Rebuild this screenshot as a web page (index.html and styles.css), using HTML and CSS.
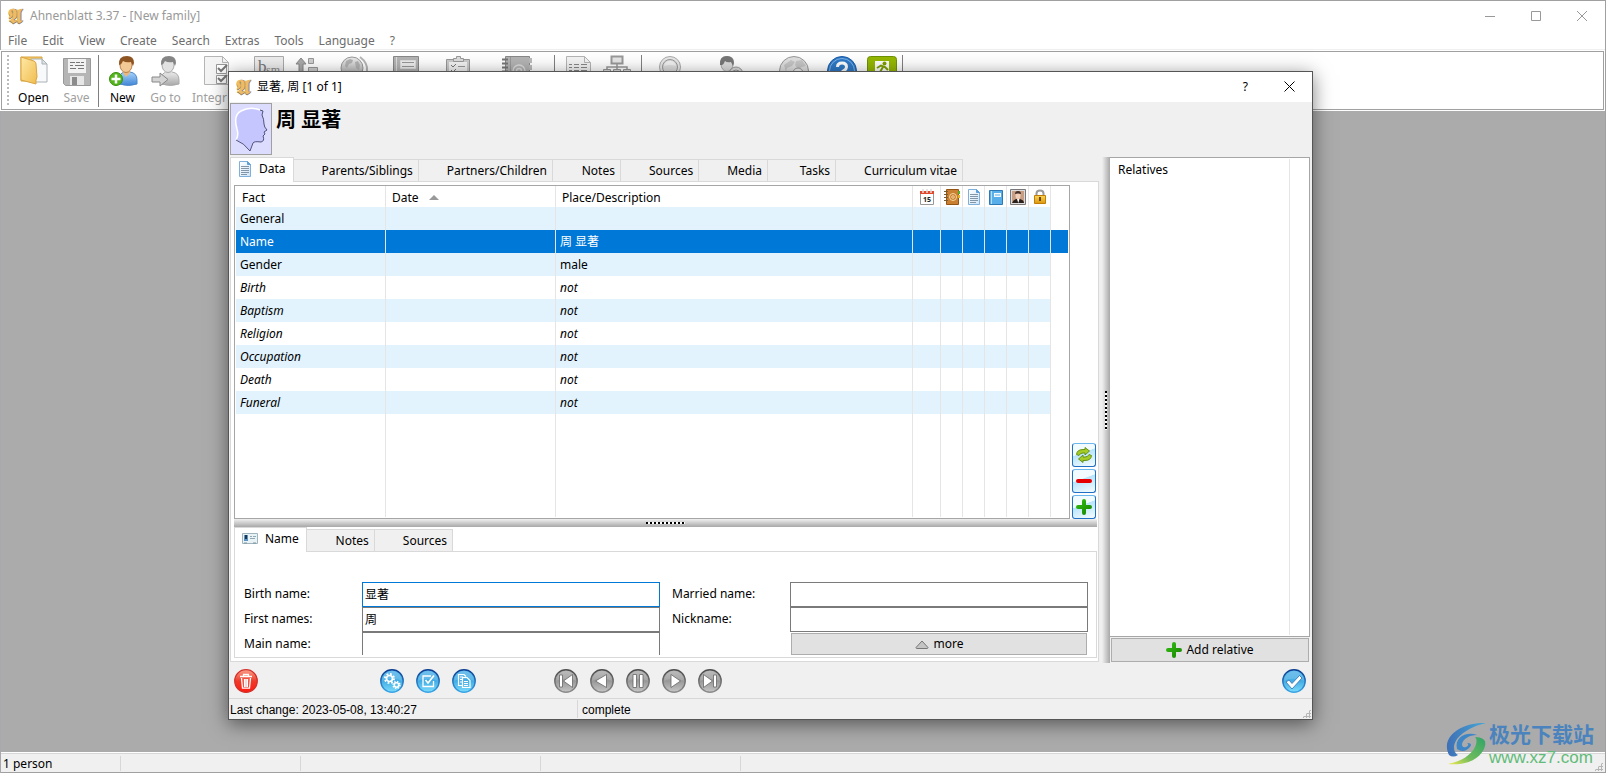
FILE: index.html
```html
<!DOCTYPE html>
<html lang="en">
<head>
    <meta charset="UTF-8">
    <meta name="viewport" content="width=device-width, initial-scale=1.0">
    <title>Ahnenblatt 3.37 - [New family]</title>
    <link rel="stylesheet" href="styles.css">
</head>
<body>
    <!-- Shared gradients and symbols -->
    <svg class="defs" width="0" height="0" aria-hidden="true">
        <defs>
            <linearGradient id="gFolder" x1="0" y1="0" x2="1" y2="1"><stop offset="0" stop-color="#ffe9a6"/><stop offset="1" stop-color="#f0bc4e"/></linearGradient>
            <linearGradient id="gGrey" x1="0" y1="0" x2="0" y2="1"><stop offset="0" stop-color="#ececec"/><stop offset="1" stop-color="#a8a8a8"/></linearGradient>
            <linearGradient id="gBlueBody" x1="0" y1="0" x2="0" y2="1"><stop offset="0" stop-color="#a9d4fa"/><stop offset="1" stop-color="#3f85d6"/></linearGradient>
            <linearGradient id="gPage" x1="0" y1="0" x2="1" y2="1"><stop offset="0" stop-color="#ffffff"/><stop offset="1" stop-color="#cfe4f8"/></linearGradient>
            <linearGradient id="gRed" x1="0" y1="0" x2="0" y2="1"><stop offset="0" stop-color="#f9a08a"/><stop offset=".5" stop-color="#ef3b2a"/><stop offset="1" stop-color="#ff1a10"/></linearGradient>
            <linearGradient id="gSky" x1="0" y1="0" x2="0" y2="1"><stop offset="0" stop-color="#5cb6ea"/><stop offset=".5" stop-color="#43ace4"/><stop offset="1" stop-color="#7bdcfb"/></linearGradient>
            <linearGradient id="gSkyRim" x1="0" y1="0" x2="0" y2="1"><stop offset="0" stop-color="#0b3c91"/><stop offset="1" stop-color="#3aa5e6"/></linearGradient>
            <linearGradient id="gNav" x1="0" y1="0" x2="0" y2="1"><stop offset="0" stop-color="#b4b4b4"/><stop offset=".5" stop-color="#989898"/><stop offset="1" stop-color="#c6c6c6"/></linearGradient>
            <linearGradient id="gNavRim" x1="0" y1="0" x2="0" y2="1"><stop offset="0" stop-color="#4d4d4d"/><stop offset="1" stop-color="#8c8c8c"/></linearGradient>
            <linearGradient id="gGreen" x1="0" y1="0" x2="1" y2="1"><stop offset="0" stop-color="#35c315"/><stop offset="1" stop-color="#178000"/></linearGradient>
            <linearGradient id="gLock" x1="0" y1="0" x2="0" y2="1"><stop offset="0" stop-color="#fbd65a"/><stop offset="1" stop-color="#dd960c"/></linearGradient>
            <linearGradient id="gSwirl" x1="0" y1="0" x2="1" y2="0"><stop offset="0" stop-color="#3f6fb5"/><stop offset="1" stop-color="#45a8d8"/></linearGradient>
            <linearGradient id="gLeaf" x1="1" y1="0" x2="0" y2="1"><stop offset="0" stop-color="#2fa368"/><stop offset=".6" stop-color="#6fbc5c"/><stop offset="1" stop-color="#f2ea50"/></linearGradient>
        </defs>
        <symbol id="page" viewBox="0 0 14 16">
            <path d="M1.5.5h8l3 3v12h-11z" fill="url(#gPage)" stroke="#7fb0dc"/>
            <path d="M9.500.5v3h3z" fill="#5f9fd8" stroke="#5f9fd8"/>
            <path d="M3 5.500h8M3 7.500h8M3 9.500h8M3 11.500h8M3 13.500h6" stroke="#8396a8"/>
        </symbol>
        <symbol id="plus" viewBox="0 0 16 16">
            <path d="M6 2q0-2 2-2t2 2v4h4q2 0 2 2t-2 2h-4v4q0 2-2 2t-2-2v-4H2Q0 10 0 8t2-2h4z" fill="url(#gGreen)"/>
        </symbol>
        <symbol id="disc-blue" viewBox="0 0 24 24">
            <circle cx="12" cy="12" r="11.200" fill="url(#gSky)" stroke="url(#gSkyRim)" stroke-width="1.400"/>
            <path d="M2 12a10 10 0 0 1 20 0c-5-3-15-3-20 0z" fill="#fff" opacity=".14"/>
        </symbol>
        <symbol id="disc-grey" viewBox="0 0 24 24">
            <circle cx="12" cy="12" r="11.200" fill="url(#gNav)" stroke="url(#gNavRim)" stroke-width="1.400"/>
            <path d="M2 12a10 10 0 0 1 20 0c-5-3-15-3-20 0z" fill="#fff" opacity=".12"/>
        </symbol>
    </svg>

    <div class="app">
        <header class="app-title">
            <span class="logo" aria-hidden="true">𝕬</span>
            <h1>Ahnenblatt 3.37 - [New family]</h1>
            <div class="app-controls">
                <button type="button" aria-label="Minimize"><svg width="10" height="10"><path d="M0 5.500h10" stroke="#999"/></svg></button>
                <button type="button" aria-label="Maximize"><svg width="10" height="10"><path d="M.5.5h9v9h-9z" fill="none" stroke="#999"/></svg></button>
                <button type="button" aria-label="Close"><svg width="10" height="10"><path d="M0 0l10 10M10 0L0 10" stroke="#999"/></svg></button>
            </div>
        </header>

        <nav class="menu">
            <a href="#">File</a>
            <a href="#">Edit</a>
            <a href="#">View</a>
            <a href="#">Create</a>
            <a href="#">Search</a>
            <a href="#">Extras</a>
            <a href="#">Tools</a>
            <a href="#">Language</a>
            <a href="#">?</a>
        </nav>

        <div class="toolbar">
            <span class="grip"></span>
            <button type="button" class="tool">
                <svg width="32" height="32" viewBox="0 0 32 32">
                    <path d="M3 2h21v24H3z" fill="#f4c964" stroke="#d9a441"/>
                    <path d="M13 4h11l5 5v18H13z" fill="#f7f9fa" stroke="#a9b1b5"/>
                    <path d="M24 4v5h5z" fill="#dde3e6" stroke="#a9b1b5"/>
                    <path d="M3 2l13 4q2 1 2 3l1 13-1 3v4L3 25z" fill="url(#gFolder)" stroke="#d9a441"/>
                </svg>
                Open
            </button>
            <button type="button" class="tool" disabled>
                <svg width="32" height="32" viewBox="0 0 32 32">
                    <path d="M2.500 3.500h27v27h-25l-2-2z" fill="#b5b5b5" stroke="#999"/>
                    <path d="M7 4h18v14H7z" fill="#f2f2f2"/>
                    <path d="M9 7.500h5m1 0h4m1 0h3M9 10.500h3m2 0h9M9 13.500h6m2 0h6" stroke="#777"/>
                    <path d="M9 21h14v9H9z" fill="#e6e6e6"/>
                    <path d="M11 22h5v8h-5z" fill="#8b8b8b"/>
                </svg>
                Save
            </button>
            <span class="sep"></span>
            <button type="button" class="tool">
                <svg width="32" height="32" viewBox="0 0 32 32">
                    <path d="M12 29v-5q0-6 6-7h5q7 1 7 8v4q-8 3-18 0z" fill="url(#gBlueBody)" stroke="#4d87c9"/>
                    <path d="M16 15h7v3l-4 4-3-4z" fill="#eab87c"/>
                    <ellipse cx="19" cy="10" rx="6" ry="7.500" fill="#f2c894" stroke="#b9824a"/>
                    <path d="M12 10q-1-9 8-9 7 0 7 7l-1 3-2-4q-5 1-8-1-1 3-4 4z" fill="#8e5421"/>
                    <circle cx="9" cy="24" r="6.500" fill="#53b51b" stroke="#3b8e0e"/>
                    <path d="M9 19.500v9M4.500 24h9" stroke="#fff" stroke-width="2.500"/>
                </svg>
                New
            </button>
            <button type="button" class="tool" disabled>
                <svg width="32" height="32" viewBox="0 0 32 32">
                    <path d="M11 29v-5q0-6 6-7h5q7 1 7 8v4q-8 3-18 0z" fill="url(#gGrey)" stroke="#aaa"/>
                    <path d="M15 15h7v3l-4 4-3-4z" fill="#ddd"/>
                    <ellipse cx="18" cy="10" rx="6" ry="7.500" fill="#e2e2e2" stroke="#aaa"/>
                    <path d="M11 10q-1-9 8-9 7 0 7 7l-1 3-2-4q-5 1-8-1-1 3-4 4z" fill="#858585"/>
                    <path d="M2 22h8v-4l8 6.500-8 6.500v-4H2z" fill="#d4d4d4" stroke="#888"/>
                </svg>
                Go to
            </button>
            <button type="button" class="tool tool-wide" disabled>
                <svg width="32" height="32" viewBox="0 0 32 32">
                    <path d="M3.500 1.500h18l6 6v22h-24z" fill="#f4f4f4" stroke="#b5b5b5"/>
                    <path d="M21.500 1.500v6h6" fill="none" stroke="#b5b5b5"/>
                    <path d="M15.500 9.500h10v9h-10zM15.500 20.500h10v8h-10z" fill="#fff" stroke="#999"/>
                    <path d="M17 13l3 3 6-6M17 23l3 3 6-6" fill="none" stroke="#777" stroke-width="2"/>
                </svg>
                <span class="tool-label">Integr</span>
            </button>
            <button type="button" class="tool" aria-label="Example" disabled>
                <svg width="32" height="32" viewBox="0 0 32 32">
                    <path d="M1.500 1.500h29v28h-29z" fill="#ededed" stroke="#aaa"/>
                    <text x="5" y="17" font-family="Liberation Serif" font-size="17" fill="#777">b</text>
                    <text x="13" y="19" font-family="Liberation Serif" font-size="12" fill="#888">sm</text>
                </svg>
            </button>
            <button type="button" class="tool tool-narrow" aria-label="Sort" disabled>
                <svg width="24" height="32" viewBox="0 0 24 32">
                    <path d="M6 3l5 6H8v18H4V9H1z" fill="#aaa" stroke="#888"/>
                    <path d="M13.500 3.500h5v5h-5zM13.500 12.500h9v5h-9z" fill="#d0d0d0" stroke="#999"/>
                </svg>
            </button>
            <button type="button" class="tool tool-wide" aria-label="Website" disabled>
                <svg width="32" height="32" viewBox="0 0 32 32">
                    <path d="M22 2q8 6 7 14-1 9-9 12" fill="none" stroke="#b5b5b5" stroke-width="2"/>
                    <circle cx="14" cy="13" r="11" fill="url(#gGrey)" stroke="#999"/>
                    <path d="M8 6l4-2 3 1-1 3-3 1-2 4-2-2zM17 7l3-1 2 4-1 5-3-2z" fill="#b2b2b2"/>
                </svg>
            </button>
            <button type="button" class="tool" aria-label="Book" disabled>
                <svg width="32" height="32" viewBox="0 0 32 32">
                    <path d="M3.500 1.500h25v28h-25z" fill="#b4b4b4" stroke="#888"/>
                    <path d="M6.500 2v27" stroke="#ddd"/>
                    <path d="M10.500 5.500h15v8h-15z" fill="#eee" stroke="#ddd"/>
                    <path d="M12 7.500h12M12 11.500h12" stroke="#999"/>
                </svg>
            </button>
            <button type="button" class="tool tool-wide" aria-label="Tasks" disabled>
                <svg width="32" height="32" viewBox="0 0 32 32">
                    <path d="M5.500 4.500h23v25h-23z" fill="#ccc" stroke="#999"/>
                    <path d="M8 7h18v22H8z" fill="#f3f3f3"/>
                    <path d="M12.500 6.500v-3h3v-2h4v2h3v3z" fill="#ddd" stroke="#999"/>
                    <path d="M10 10l2 2 3-3M10 15l2 2 3-3" fill="none" stroke="#777"/>
                    <path d="M17 11.500h7M17 16.500h7" stroke="#999"/>
                </svg>
            </button>
            <button type="button" class="tool tool-wide" aria-label="Addresses" disabled>
                <svg width="32" height="32" viewBox="0 0 32 32">
                    <path d="M4.500 1.500h24v28h-24z" fill="#b4b4b4" stroke="#888"/>
                    <path d="M1 4.500h6M1 8.500h6M1 12.500h6M1 16.500h6" stroke="#777" stroke-width="2"/>
                    <path d="M9.500 2v27" stroke="#999"/>
                    <path d="M28 3h3v5h-3zM28 10h3v5h-3z" fill="#bbb"/>
                    <circle cx="18" cy="16" r="6" fill="none" stroke="#dcdcdc" stroke-width="1.500"/>
                    <circle cx="18" cy="16" r="2.500" fill="none" stroke="#dcdcdc" stroke-width="1.500"/>
                </svg>
            </button>
            <span class="sep sep-gap"></span>
            <button type="button" class="tool" aria-label="List" disabled>
                <svg width="32" height="32" viewBox="0 0 32 32">
                    <path d="M3.500 1.500h18l6 6v22h-24z" fill="#f4f4f4" stroke="#b5b5b5"/>
                    <path d="M21.500 1.500v6h6" fill="none" stroke="#b5b5b5"/>
                    <path d="M6 9.500h3m2 0h5m2 0h6M6 12.500h3m2 0h5m2 0h6M6 15.500h3m2 0h5m2 0h6" stroke="#888"/>
                </svg>
            </button>
            <button type="button" class="tool tool-narrow" aria-label="Tree" disabled>
                <svg width="30" height="32" viewBox="0 0 30 32">
                    <path d="M9.500 1.500h11v7h-11z" fill="#e6e6e6" stroke="#999" stroke-width="2"/>
                    <path d="M15 9v6M5 16v-4h20v4" fill="none" stroke="#999" stroke-width="1.500"/>
                    <path d="M1.500 14.500h7v5h-7zM11.500 14.500h7v5h-7zM21.500 14.500h7v5h-7z" fill="#ddd" stroke="#999"/>
                </svg>
            </button>
            <span class="sep sep-gap"></span>
            <button type="button" class="tool tool-search" aria-label="Search" disabled>
                <svg width="32" height="32" viewBox="0 0 32 32">
                    <circle cx="16" cy="12" r="10.500" fill="#e8e8e8" stroke="#aaa"/>
                    <circle cx="16" cy="12" r="7.500" fill="#dedede" stroke="#999"/>
                    <path d="M10 11q1-5 6-5t6 5q-6-2-12 0z" fill="#f2f2f2"/>
                </svg>
            </button>
            <button type="button" class="tool tool-find" aria-label="Find person" disabled>
                <svg width="32" height="32" viewBox="0 0 32 32">
                    <ellipse cx="12" cy="9" rx="6" ry="7.500" fill="#ddd" stroke="#aaa"/>
                    <path d="M5 10q-1-9 7-9 7 0 7 7l-1 3-2-4q-4 1-6-1-1 3-3 4z" fill="#777"/>
                    <path d="M5 29q0-12 8-12t9 12z" fill="#aaa"/>
                    <circle cx="21" cy="19" r="7" fill="#ddd" stroke="#999"/>
                    <circle cx="21" cy="19" r="4" fill="#eee" stroke="#999"/>
                </svg>
            </button>
            <button type="button" class="tool tool-web" aria-label="Web search" disabled>
                <svg width="32" height="32" viewBox="0 0 32 32">
                    <circle cx="16" cy="16" r="14.500" fill="#e0e0e0" stroke="#999"/>
                    <path d="M6 10l7-5 4 2-3 4-5 2-1 4zM18 6l6-1 4 6-4 1-4 2-3-4z" fill="#c6c6c6"/>
                    <circle cx="20" cy="18" r="5" fill="#eee" stroke="#999"/>
                </svg>
            </button>
            <button type="button" class="tool tool-help" aria-label="Help">
                <svg width="32" height="32" viewBox="0 0 32 32">
                    <circle cx="16" cy="16" r="14.500" fill="#2f79c7" stroke="#1b5ca8"/>
                    <circle cx="16" cy="16" r="12.500" fill="none" stroke="#7fb6ea"/>
                    <path d="M11.500 12q0-4 4.500-4t4.500 4q0 2-2.500 3.500T16 19" fill="none" stroke="#fff" stroke-width="3"/>
                </svg>
            </button>
            <button type="button" class="tool tool-exit" aria-label="Exit">
                <svg width="32" height="32" viewBox="0 0 32 32">
                    <rect x="1.500" y="1.500" width="29" height="29" rx="3" fill="#95b800" stroke="#6f9104"/>
                    <path d="M9 6h14v20H9z" fill="#fff"/>
                    <circle cx="18.500" cy="8.500" r="2" fill="#7da000"/>
                    <path d="M11 13l4-2.500 4 1.500 3 3M17 12l-3 5-3 3" fill="none" stroke="#7da000" stroke-width="2"/>
                </svg>
            </button>
            <span class="sep"></span>
        </div>

        <main class="workspace"></main>

        <footer class="app-status">
            <span class="cell cell-count">1 person</span>
            <span class="cell cell-a"></span>
            <span class="cell cell-b"></span>
            <span class="cell cell-c"></span>
            <span class="size-grip"></span>
        </footer>
    </div>

    <section class="dialog" role="dialog" aria-labelledby="dialogTitle">
        <header class="dialog-title">
            <span class="logo" aria-hidden="true">𝕬</span>
            <h2 id="dialogTitle">显著, 周 [1 of 1]</h2>
            <div class="dialog-controls">
                <button type="button">?</button>
                <button type="button" aria-label="Close"><svg width="11" height="11"><path d="M.5.5l10 10M10.500.5l-10 10" stroke="#000"/></svg></button>
            </div>
        </header>

        <div class="person">
            <div class="portrait">
                <svg width="38" height="48" viewBox="0 0 38 48">
                    <path d="M4 35q3-5 1-11Q1 10 9 6q9-5 19-1l3 1-1 4q2 4 2 9 0 3 3 6l-3 2 1 2-2 2q2 5-2 6-7-1-8 1l-3 8Q12 38 4 35z" fill="#c6c6ff"/>
                    <path d="M4 35q3-5 1-11Q1 10 9 6q9-5 19-1" fill="none" stroke="#fff" stroke-width="1.500"/>
                    <path d="M28 5l3 1-1 4q2 4 2 9 0 3 3 6l-3 2 1 2-2 2q2 5-2 6-7-1-8 1l-3 8Q12 38 4 35" fill="none" stroke="#44446a" stroke-width=".9"/>
                </svg>
            </div>
            <strong class="person-name">周 显著</strong>
        </div>

        <div class="dialog-body">
            <div class="details">
                <div class="tabs" role="tablist">
                    <button type="button" class="tab active" role="tab" aria-selected="true"><svg width="14" height="16"><use href="#page"/></svg>Data</button>
                    <button type="button" class="tab" role="tab">Parents/Siblings</button>
                    <button type="button" class="tab" role="tab">Partners/Children</button>
                    <button type="button" class="tab" role="tab">Notes</button>
                    <button type="button" class="tab" role="tab">Sources</button>
                    <button type="button" class="tab" role="tab">Media</button>
                    <button type="button" class="tab" role="tab">Tasks</button>
                    <button type="button" class="tab" role="tab">Curriculum vitae</button>
                </div>

                <div class="panel">
                    <div class="facts-row">
                        <div class="facts-box">
                            <table class="facts">
                                <colgroup>
                                    <col class="col-fact"><col class="col-date"><col><col class="col-cal">
                                    <col class="col-icon"><col class="col-icon"><col class="col-icon"><col class="col-icon"><col class="col-icon">
                                    <col class="col-end">
                                </colgroup>
                                <thead>
                                    <tr>
                                        <th>Fact</th>
                                        <th>Date <span class="sort"></span></th>
                                        <th>Place/Description</th>
                                        <th class="icon" aria-label="Calendar"><svg width="16" height="16" viewBox="0 0 16 16"><path d="M1.500 2.500h13v13h-13z" fill="#fff" stroke="#999"/><path d="M1 2h14v3H1z" fill="#e2492c"/><path d="M4 0v4M8 0v4M12 0v4" stroke="#ddd" stroke-width="1.500"/><text x="4" y="13" font-family="Noto Sans" font-size="7" font-weight="700" fill="#222">15</text></svg></th>
                                        <th class="icon" aria-label="Address"><svg width="16" height="16" viewBox="0 0 16 16"><path d="M2.500.5h12v15h-12z" fill="#c98030" stroke="#945514"/><path d="M0 2.500h4M0 5.500h4M0 8.500h4M0 11.500h4" stroke="#7a5a30"/><path d="M14 2h2v3h-2z" fill="#58b030"/><path d="M14 6h2v3h-2z" fill="#e8b020"/><circle cx="9" cy="8" r="3.500" fill="none" stroke="#f5d5a0"/><circle cx="9" cy="8" r="1.300" fill="none" stroke="#f5d5a0"/></svg></th>
                                        <th class="icon" aria-label="Notes"><svg width="14" height="16"><use href="#page"/></svg></th>
                                        <th class="icon" aria-label="Sources"><svg width="16" height="16" viewBox="0 0 16 16"><path d="M1.500 1.500h13v14h-13z" fill="#58aee8" stroke="#2e78b4"/><path d="M3.500 2v13" stroke="#b5defa"/><path d="M6 4h7v4H6z" fill="#f4faff"/><path d="M7 6h5" stroke="#58aee8"/></svg></th>
                                        <th class="icon" aria-label="Media"><svg width="16" height="16" viewBox="0 0 16 16"><path d="M.5.500h15v15H.5z" fill="#ddd" stroke="#777"/><path d="M2 2h12v12H2z" fill="#c79e84"/><path d="M2 14q1-3 4-4h4q4 1 4 4z" fill="#2a211d"/><ellipse cx="8" cy="6.500" rx="2.500" ry="3.500" fill="#f0d0b8"/><path d="M5 5q0-3 3-3t3 3q-3-1-6 0z" fill="#46302a"/><path d="M7 10h2.500L8.300 14z" fill="#fff"/></svg></th>
                                        <th class="icon" aria-label="Locked"><svg width="14" height="16" viewBox="0 0 14 16"><path d="M3.500 7V4.500Q3.500 1.500 7 1.500t3.500 3V7" fill="none" stroke="#9a9a9a" stroke-width="2"/><path d="M1.500 6.500h11v8h-11z" fill="url(#gLock)" stroke="#c07e08"/><path d="M6 8h2v4H6z" fill="#6b4700"/></svg></th>
                                        <th></th>
                                    </tr>
                                </thead>
                                <tbody>
                                    <tr class="alt"><td>General</td><td></td><td></td><td></td><td></td><td></td><td></td><td></td><td></td><td></td></tr>
                                    <tr class="selected"><td>Name</td><td></td><td>周 显著</td><td></td><td></td><td></td><td></td><td></td><td></td><td></td></tr>
                                    <tr class="alt"><td>Gender</td><td></td><td>male</td><td></td><td></td><td></td><td></td><td></td><td></td><td></td></tr>
                                    <tr class="empty"><td>Birth</td><td></td><td>not</td><td></td><td></td><td></td><td></td><td></td><td></td><td></td></tr>
                                    <tr class="empty alt"><td>Baptism</td><td></td><td>not</td><td></td><td></td><td></td><td></td><td></td><td></td><td></td></tr>
                                    <tr class="empty"><td>Religion</td><td></td><td>not</td><td></td><td></td><td></td><td></td><td></td><td></td><td></td></tr>
                                    <tr class="empty alt"><td>Occupation</td><td></td><td>not</td><td></td><td></td><td></td><td></td><td></td><td></td><td></td></tr>
                                    <tr class="empty"><td>Death</td><td></td><td>not</td><td></td><td></td><td></td><td></td><td></td><td></td><td></td></tr>
                                    <tr class="empty alt"><td>Funeral</td><td></td><td>not</td><td></td><td></td><td></td><td></td><td></td><td></td><td></td></tr>
                                    <tr class="filler"><td></td><td></td><td></td><td></td><td></td><td></td><td></td><td></td><td></td><td></td></tr>
                                </tbody>
                            </table>
                        </div>
                        <div class="fact-buttons">
                            <button type="button" aria-label="Change fact"><svg width="16" height="16" viewBox="0 0 16 16"><path d="M.5 7.500Q1 2.500 7 2.500h2V.5l4.500 3.500L9 8V6H7Q4 6 3 8.500z" fill="#a4cc24" stroke="#5c8a0c" stroke-width=".9"/><path d="M15.500 8.500Q15 13.500 9 13.500H7v2L2.500 12 7 8v2h2q3 0 4-2.500z" fill="#a4cc24" stroke="#5c8a0c" stroke-width=".9"/></svg></button>
                            <button type="button" aria-label="Delete fact"><svg width="16" height="16" viewBox="0 0 16 16"><rect y="6" width="16" height="4" rx="2" fill="#e60000"/></svg></button>
                            <button type="button" aria-label="Add fact"><svg width="16" height="16"><use href="#plus"/></svg></button>
                        </div>
                    </div>

                    <div class="splitter"><span></span></div>

                    <div class="tabs" role="tablist">
                        <button type="button" class="tab active" role="tab" aria-selected="true"><svg width="16" height="16" viewBox="0 0 16 16"><path d="M.5 2.500h15v10H.5z" fill="#e9f3f6" stroke="#9fb4bd"/><path d="M2 4h4v6H2z" fill="#5a93c4"/><path d="M3 4h2v4H3z" fill="#234"/><path d="M8 5.500h2m1 0h3M8 7.500h5" stroke="#8fa9b5"/><path d="M2 12h3M11 12h3" stroke="#7d939d"/></svg>Name</button>
                        <button type="button" class="tab" role="tab">Notes</button>
                        <button type="button" class="tab" role="tab">Sources</button>
                    </div>

                    <form class="name-form">
                        <div class="field-col">
                            <label for="birthName">Birth name:</label>
                            <input type="text" id="birthName" class="focused" value="显著">
                            <label for="firstNames">First names:</label>
                            <input type="text" id="firstNames" value="周">
                            <label for="mainName">Main name:</label>
                            <input type="text" id="mainName">
                        </div>
                        <div class="field-col">
                            <label for="marriedName">Married name:</label>
                            <input type="text" id="marriedName">
                            <label for="nickname">Nickname:</label>
                            <input type="text" id="nickname">
                            <button type="button" class="flat more"><svg width="14" height="9" viewBox="0 0 14 9"><path d="M1 7.500L7 1l6 6.500q0 1-1 1H2q-1 0-1-1z" fill="#c4c4c4" stroke="#777"/></svg>more</button>
                        </div>
                    </form>
                </div>
            </div>

            <div class="splitter vertical"><span></span></div>

            <aside class="relatives">
                <div class="relatives-list">
                    <h3>Relatives</h3>
                    <span></span>
                </div>
                <button type="button" class="flat add"><svg width="16" height="16"><use href="#plus"/></svg>Add relative</button>
            </aside>
        </div>

        <div class="actions">
            <button type="button" aria-label="Delete person"><svg width="24" height="24" viewBox="0 0 24 24"><circle cx="12" cy="12" r="11.300" fill="url(#gRed)" stroke="#d3312a" stroke-width="1.200"/><path d="M6 7.500h12M9.500 7V5.500h5V7M7.500 9l1 10.200h7l1-10.200M10.500 10v8M12 10v8M13.500 10v8" fill="none" stroke="#fff" stroke-width="1.300"/></svg></button>
            <div class="action-group">
                <button type="button" aria-label="Settings"><svg width="24" height="24" viewBox="0 0 24 24"><use href="#disc-blue"/><circle cx="9.500" cy="9.500" r="3" fill="none" stroke="#fff" stroke-width="1.700"/><circle cx="9.500" cy="9.500" r="4.500" fill="none" stroke="#fff" stroke-width="2" stroke-dasharray="1.800 1.730"/><circle cx="16.500" cy="16" r="2.200" fill="none" stroke="#fff" stroke-width="1.500"/><circle cx="16.500" cy="16" r="3.400" fill="none" stroke="#fff" stroke-width="1.600" stroke-dasharray="1.400 1.270"/></svg></button>
                <button type="button" aria-label="Check"><svg width="24" height="24" viewBox="0 0 24 24"><use href="#disc-blue"/><path d="M15 7H7v10.500h10.500V12" fill="none" stroke="#fff" stroke-width="1.300"/><path d="M9.500 11l2.500 3 6-7.500" fill="none" stroke="#fff" stroke-width="1.600"/></svg></button>
                <button type="button" aria-label="Copy"><svg width="24" height="24" viewBox="0 0 24 24"><use href="#disc-blue"/><path d="M10 16.500H6.500v-11H12l2 2M8 8h3M8 10.500h2M8 13h2" fill="none" stroke="#fff" stroke-width="1.200"/><path d="M10.500 8.500h4.500l3 3v7h-7.500zM12 12.500h4M12 14.500h4M12 16.500h4" fill="none" stroke="#fff" stroke-width="1.200"/></svg></button>
            </div>
            <div class="action-group">
                <button type="button" aria-label="First"><svg width="24" height="24" viewBox="0 0 24 24"><use href="#disc-grey"/><path d="M5.500 6h3v12h-3zM9.500 12l9-6.500v13z" fill="#fff" stroke="#666" stroke-width=".8"/></svg></button>
                <button type="button" aria-label="Previous"><svg width="24" height="24" viewBox="0 0 24 24"><use href="#disc-grey"/><path d="M5.500 12L16.500 5.500v13z" fill="#fff" stroke="#666" stroke-width=".8"/></svg></button>
                <button type="button" aria-label="Pause"><svg width="24" height="24" viewBox="0 0 24 24"><use href="#disc-grey"/><path d="M7 5.500h3.500v13H7zM13.500 5.500H17v13h-3.500z" fill="#fff" stroke="#666" stroke-width=".8"/></svg></button>
                <button type="button" aria-label="Next"><svg width="24" height="24" viewBox="0 0 24 24"><use href="#disc-grey"/><path d="M18.500 12L9 5.500v13z" fill="#fff" stroke="#666" stroke-width=".8"/></svg></button>
                <button type="button" aria-label="Last"><svg width="24" height="24" viewBox="0 0 24 24"><use href="#disc-grey"/><path d="M18.500 6h-3v12h3zM14.500 12l-9-6.500v13z" fill="#fff" stroke="#666" stroke-width=".8"/></svg></button>
            </div>
            <button type="button" class="ok" aria-label="OK"><svg width="24" height="24" viewBox="0 0 24 24"><use href="#disc-blue"/><path d="M4 13l3-2 3 3.500L17.500 6.500l2.500 2.500L10 20z" fill="#fff" stroke="#2b6fae" stroke-width=".8"/></svg></button>
        </div>

        <footer class="dialog-status">
            <span class="last-change">Last change: 2023-05-08, 13:40:27</span>
            <span class="state">complete</span>
            <span class="size-grip"></span>
        </footer>
    </section>

    <div class="watermark">
        <svg width="42" height="44" viewBox="0 0 42 44">
            <path d="M4 33C-5 15 16 0 41 1 27 4 10 13 9 25q0 6 4 8-5 3-9 0z" fill="url(#gSwirl)"/>
            <path d="M12 27C9 15 22 9 32 13c-8 0-14 4-15 9q0 4 4 3 4-2 1-4 6 0 3 4-6 7-13 2z" fill="#3f86c6"/>
            <path d="M30 15q12 0 10 9C37 36 22 44 3 42c14-3 23-9 27-17 2-5 2-8 0-10z" fill="url(#gLeaf)"/>
        </svg>
        <div>
            <span class="mark-name">极光下载站</span>
            <span class="mark-url">www.xz7.com</span>
        </div>
    </div>
</body>
</html>
```
FILE: styles.css
```css
* {
    box-sizing: border-box;
}
body {
    margin: 0;
    height: 100vh;
    overflow: hidden;
    font-family: "Noto Sans", "Noto Sans CJK SC", sans-serif;
    font-size: 12px;
    line-height: 16px;
    color: #000;
    background: #a0a0a0;
}
h1, h2, h3 {
    margin: 0;
    font-size: 12px;
    font-weight: 400;
}
button, input {
    font: inherit;
    color: inherit;
}
button {
    display: flex;
    align-items: center;
    justify-content: center;
    padding: 0;
    border: none;
    background: none;
}
svg {
    display: block;
    flex: none;
}
.defs {
    position: absolute;
}
.logo {
    width: 17px;
    font-family: "DejaVu Sans", "DejaVu Serif", serif;
    font-size: 20px;
    font-weight: 700;
    color: #eebb66;
    text-shadow: 0 1px 0 #8b7a5a, 1px 0 0 #8b7a5a;
}

/* Main window */
.app {
    display: flex;
    flex-direction: column;
    height: 100vh;
    padding: 1px 0;
    border-left: 1px solid #a9a9ad;
    margin-right: 1px;
}
.app-title {
    display: flex;
    align-items: center;
    gap: 5px;
    height: 30px;
    padding: 0 18px 1px 7px;
    background: #fff;
    color: #999;
}
.app-controls {
    display: flex;
    gap: 36px;
    margin-left: auto;
}
.menu {
    display: flex;
    gap: 15px;
    height: 20px;
    padding: 2px 7px;
    background: #fff;
    border-bottom: 2px solid #f0f0f0;
}
.menu a {
    color: #6d6d6d;
    text-decoration: none;
}
.toolbar {
    display: flex;
    height: 59px;
    margin-right: 1px;
    padding: 3px 0 2px 5px;
    background: #fff;
    border: 1px solid #a0a0a0;
    outline: 1px solid #fff;
    outline-offset: 0;
    z-index: 1;
}
.grip {
    width: 2px;
    margin-right: 3px;
    background: repeating-linear-gradient(#bbb 0 2px, #fff 2px 4px);
}
.tool {
    flex-direction: column;
    justify-content: flex-start;
    flex: none;
    gap: 3px;
    width: 43px;
    white-space: nowrap;
}
.tool:disabled {
    color: #a0a0a0;
}
.tool-label {
    align-self: flex-start;
    padding-left: 5px;
}
.tool-wide { width: 60px; }
.tool-narrow { width: 34px; }
.tool-search { width: 52px; }
.tool-find { width: 70px; }
.tool-web { width: 56px; }
.tool-help { width: 40px; }
.tool-exit { width: 40px; }
.sep {
    width: 1px;
    margin: 0 2px 0 0;
    background: #808080;
}
.sep-gap {
    margin-left: 7px;
}
.workspace {
    flex: 1;
    margin-top: 1px;
    background: #ababab;
}
.app-status {
    display: flex;
    height: 20px;
    padding: 3px 2px 1px;
    background: #f0f0f0;
    border-top: 1px solid #fff;
    box-shadow: inset 0 1px 0 #d7d7d7;
}
.cell {
    border-right: 1px solid #d7d7d7;
}
.cell-count { width: 118px; }
.cell-a { width: 180px; }
.cell-b { width: 240px; }
.cell-c { width: 200px; }
.size-grip {
    align-self: flex-end;
    width: 9px;
    height: 9px;
    margin-left: auto;
    background: radial-gradient(#b5b5b5 60%, transparent 62%) 0 0 / 3px 3px;
    clip-path: polygon(100% 0, 100% 100%, 0 100%);
}

/* Person dialog, floats over the main window */
.dialog {
    position: absolute;
    inset: 71px 293px 53px 228px;
    display: flex;
    flex-direction: column;
    z-index: 2;
    background: #f0f0f0;
    border: 1px solid #555;
    box-shadow: 0 4px 18px rgba(0, 0, 0, 0.5);
}
.dialog-title {
    display: flex;
    align-items: center;
    gap: 4px;
    height: 30px;
    padding: 0 17px 1px 7px;
    background: #fff;
}
.dialog-controls {
    display: flex;
    gap: 36px;
    margin-left: auto;
}
.person {
    display: flex;
    gap: 4px;
    height: 55px;
    padding: 1px;
}
.portrait {
    width: 42px;
    height: 52px;
    padding: 1px;
    background: #dcdcff;
    border: 1px solid #a0a0a0;
}
.person-name {
    font-size: 20px;
    line-height: 34px;
}
.dialog-body {
    display: flex;
    flex: 1;
    min-height: 0;
    padding-right: 2px;
}
.details {
    display: flex;
    flex-direction: column;
    flex: 1;
    min-width: 0;
    padding: 0 3px 1px 1px;
}
.tabs {
    display: flex;
    align-items: flex-end;
    height: 25px;
    margin-bottom: -1px;
    z-index: 1;
}
.tab {
    justify-content: flex-end;
    min-width: 69px;
    height: 23px;
    margin-left: -1px;
    padding: 0 5px 0 28px;
    background: #f0f0f0;
    border: 1px solid #d9d9d9;
}
.tab.active {
    gap: 7px;
    min-width: 0;
    height: 25px;
    margin-left: 0;
    padding: 0 7px 3px 7px;
    background: #fff;
    border-bottom: none;
}
.panel {
    display: flex;
    flex-direction: column;
    flex: 1;
    min-height: 0;
    padding: 3px 1px 3px 3px;
    background: #fff;
    border: 1px solid #d9d9d9;
}
.facts-row {
    display: flex;
    flex: 1;
    gap: 2px;
    min-height: 0;
    padding-right: 1px;
}
.facts-box {
    flex: 1;
    padding: 0 1px 1px 1px;
    border: 1px solid #a6a6a6;
}
.facts {
    width: 100%;
    height: 100%;
    table-layout: fixed;
    border-spacing: 0;
}
.col-fact { width: 150px; }
.col-date { width: 170px; }
.col-cal { width: 28px; }
.col-icon { width: 22px; }
.col-end { width: 17px; }
.facts th, .facts td {
    height: 23px;
    padding: 0 4px;
    border-right: 1px solid #e5e5e5;
    text-align: left;
    font-weight: 400;
}
.facts th {
    height: 21px;
    padding: 3px 6px 0;
}
.facts th.icon {
    padding: 1px 0 0;
}
.facts th.icon svg {
    margin: 0 auto;
}
.facts th:last-child, .facts td:last-child {
    border-right: none;
}
.facts .alt td:not(:last-child) {
    background: #e2f3fe;
}
.facts .selected td {
    background: #0078d7;
    color: #fff;
}
.facts .empty td {
    font-style: italic;
}
.facts .filler td {
    height: auto;
}
.sort {
    display: inline-block;
    margin: 0 0 2px 7px;
    border: 5px solid transparent;
    border-top: none;
    border-bottom-color: #999;
}
.fact-buttons {
    display: flex;
    flex-direction: column;
    justify-content: flex-end;
    gap: 2px;
}
.fact-buttons button {
    width: 24px;
    height: 24px;
    border: 1px solid #1f6fc4;
    border-top-color: #6cb8ee;
    border-radius: 3px;
    background: linear-gradient(160deg, #f2fbff 40%, #b9e4fb 42%, #f6fdff);
}
.splitter {
    display: flex;
    align-items: center;
    justify-content: center;
    height: 8px;
    background: linear-gradient(#f0f0f0, #a8a8a8);
}
.splitter span {
    width: 39px;
    height: 2px;
    background: repeating-linear-gradient(90deg, #000 0 2px, #fff 2px 4px);
}
.splitter.vertical {
    width: 8px;
    height: auto;
    background: linear-gradient(90deg, #f0f0f0, #a8a8a8);
}
.splitter.vertical span {
    width: 2px;
    height: 39px;
    background: repeating-linear-gradient(#000 0 2px, #fff 2px 4px);
}
.name-form {
    display: flex;
    gap: 12px;
    height: 107px;
    padding: 30px 8px 0 9px;
    overflow: hidden;
    border: 1px solid #d9d9d9;
}
.field-col {
    display: grid;
    grid-template-columns: 118px 1fr;
    grid-template-rows: 25px 25px 23px;
    flex: 1;
    height: 73px;
    overflow: hidden;
    line-height: 24px;
}
.field-col input {
    width: 100%;
    min-width: 0;
    height: 25px;
    padding: 0 2px 2px;
    border: 1px solid #7a7a7a;
    background: #fff;
}
.field-col input.focused {
    border-color: #0078d7;
}
.flat {
    background: #e1e1e1;
    border: 1px solid #adadad;
}
.more {
    grid-column: 2;
    gap: 5px;
    height: 22px;
    margin: 1px 1px 0;
    line-height: 16px;
}
.relatives {
    display: flex;
    flex-direction: column;
    gap: 1px;
    width: 200px;
    padding-bottom: 1px;
}
.relatives-list {
    display: flex;
    flex: 1;
    padding: 1px;
    background: #fff;
    border: 1px solid #a6a6a6;
    border-left: none;
}
.relatives-list h3 {
    flex: 1;
    padding: 3px 7px;
    border-right: 1px solid #e5e5e5;
}
.relatives-list span {
    width: 18px;
}
.add {
    gap: 4px;
    height: 24px;
    margin: 0 1px;
}
.actions {
    display: flex;
    align-items: center;
    height: 35px;
    padding: 0 6px 0 5px;
}
.action-group {
    display: flex;
    gap: 12px;
    margin-left: 122px;
}
.action-group + .action-group {
    margin-left: 78px;
}
.actions .ok {
    margin-left: auto;
}
.dialog-status {
    display: flex;
    height: 21px;
    padding: 1px;
    border-top: 1px solid #d7d7d7;
    font-family: "Liberation Sans", Arial, sans-serif;
    line-height: 20px;
}
.last-change {
    width: 348px;
    border-right: 1px solid #d7d7d7;
}
.state {
    padding-left: 4px;
}

/* Watermark in the corner */
.watermark {
    position: absolute;
    right: 12px;
    bottom: 3px;
    z-index: 3;
    display: flex;
    gap: 2px;
}
.mark-name, .mark-url {
    display: block;
    line-height: 24px;
}
.mark-name {
    font-size: 21px;
    font-weight: 700;
    color: #4a83bd;
}
.mark-url {
    font-family: "Liberation Sans", Arial, sans-serif;
    font-size: 17px;
    color: #62bb78;
}
```
